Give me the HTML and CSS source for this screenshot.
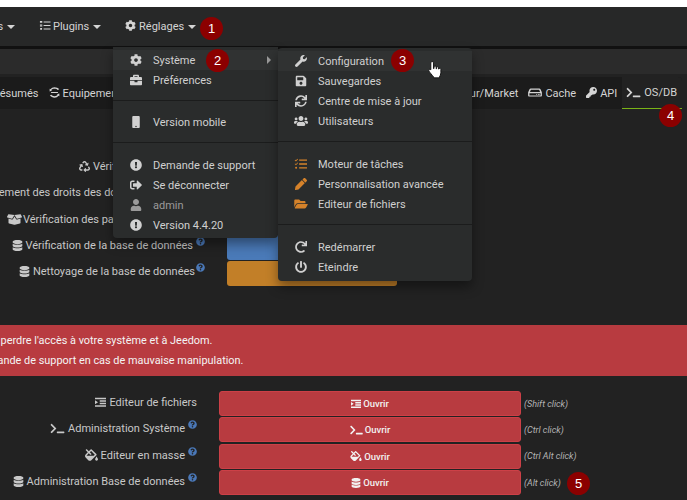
FILE: index.html
```html
<!DOCTYPE html>
<html lang="fr">

<head>
    <meta charset="UTF-8">
    <title>Jeedom OS/DB</title>
    <link rel="stylesheet" href="styles.css">
</head>

<body>
    <svg class="sprite" xmlns="http://www.w3.org/2000/svg">
        <symbol id="i-cog" viewBox="0 0 512 512"><path d="M487.4 315.7l-42.6-24.6c4.3-23.2 4.3-47 0-70.2l42.6-24.6c4.9-2.8 7.1-8.6 5.5-14-11.1-35.6-30-67.8-54.7-94.6-3.8-4.1-10-5.1-14.8-2.3L380.8 110c-17.9-15.4-38.5-27.3-60.8-35.1V25.8c0-5.6-3.9-10.5-9.4-11.7-36.7-8.2-74.3-7.8-109.2 0-5.5 1.2-9.4 6.1-9.4 11.7V75c-22.2 7.9-42.8 19.8-60.8 35.1L88.7 85.5c-4.9-2.8-11-1.9-14.8 2.3-24.7 26.7-43.6 58.9-54.7 94.6-1.7 5.4.6 11.2 5.5 14L67.3 221c-4.3 23.2-4.3 47 0 70.2l-42.6 24.6c-4.9 2.8-7.1 8.6-5.5 14 11.1 35.6 30 67.8 54.7 94.6 3.8 4.1 10 5.1 14.8 2.3l42.6-24.6c17.9 15.4 38.5 27.3 60.8 35.1v49.2c0 5.6 3.9 10.5 9.4 11.7 36.7 8.2 74.3 7.8 109.2 0 5.5-1.2 9.4-6.1 9.4-11.7v-49.2c22.2-7.9 42.8-19.8 60.8-35.1l42.6 24.6c4.9 2.8 11 1.9 14.8-2.3 24.7-26.7 43.6-58.9 54.7-94.6 1.5-5.5-.7-11.3-5.6-14.1zM256 336c-44.1 0-80-35.9-80-80s35.9-80 80-80 80 35.9 80 80-35.9 80-80 80z"/></symbol>
        <symbol id="i-wrench" viewBox="0 0 512 512"><path d="M507.73 109.1c-2.24-9.03-13.54-12.09-20.12-5.51l-74.36 74.36-67.88-11.31-11.31-67.88 74.36-74.36c6.62-6.62 3.43-17.9-5.66-20.16-47.38-11.74-99.55.91-136.58 37.93-39.64 39.64-50.55 97.1-34.05 147.2L18.74 402.76c-24.99 24.99-24.99 65.51 0 90.5 24.99 24.99 65.51 24.99 90.5 0l213.21-213.21c50.12 16.71 107.47 5.68 147.37-34.22 37.07-37.07 49.7-89.32 37.91-136.73z"/></symbol>
        <symbol id="i-save" viewBox="0 0 448 512"><path d="M433.941 129.941l-83.882-83.882A48 48 0 0 0 316.118 32H48C21.49 32 0 53.49 0 80v352c0 26.51 21.49 48 48 48h352c26.51 0 48-21.49 48-48V163.882a48 48 0 0 0-14.059-33.941zM224 416c-35.346 0-64-28.654-64-64 0-35.346 28.654-64 64-64s64 28.654 64 64c0 35.346-28.654 64-64 64zm96-304.52V212c0 6.627-5.373 12-12 12H76c-6.627 0-12-5.373-12-12V108c0-6.627 5.373-12 12-12h228.52c3.183 0 6.235 1.264 8.485 3.515l3.48 3.48A11.996 11.996 0 0 1 320 111.48z"/></symbol>
        <symbol id="i-sync" viewBox="0 0 512 512"><path d="M440.65 12.57l4 82.77A247.16 247.16 0 0 0 255.83 8C134.73 8 33.91 94.92 12.29 209.82A12 12 0 0 0 24.09 224h49.05a12 12 0 0 0 11.67-9.26 175.91 175.91 0 0 1 317-56.94l-101.46-4.86a12 12 0 0 0-12.57 12v47.41a12 12 0 0 0 12 12H500a12 12 0 0 0 12-12V12a12 12 0 0 0-12-12h-47.37a12 12 0 0 0-11.98 12.57zM255.83 432a175.61 175.61 0 0 1-146-77.8l101.8 4.87a12 12 0 0 0 12.57-12v-47.4a12 12 0 0 0-12-12H12a12 12 0 0 0-12 12V500a12 12 0 0 0 12 12h47.35a12 12 0 0 0 12-12.6l-4.15-82.57A247.17 247.17 0 0 0 255.83 504c121.11 0 221.93-86.92 243.55-201.82a12 12 0 0 0-11.8-14.18h-49.05a12 12 0 0 0-11.67 9.26A175.86 175.86 0 0 1 255.83 432z"/></symbol>
        <symbol id="i-users" viewBox="0 0 640 512"><path d="M96 224c35.3 0 64-28.7 64-64s-28.7-64-64-64-64 28.7-64 64 28.7 64 64 64zm448 0c35.3 0 64-28.7 64-64s-28.7-64-64-64-64 28.7-64 64 28.7 64 64 64zm32 32h-64c-17.6 0-33.5 7.1-45.1 18.6 40.3 22.1 68.9 62 75.1 109.4h66c17.7 0 32-14.3 32-32v-32c0-35.3-28.7-64-64-64zm-256 0c61.9 0 112-50.1 112-112S381.9 32 320 32 208 82.1 208 144s50.1 112 112 112zm76.8 32h-8.3c-20.8 10-43.9 16-68.5 16s-47.6-6-68.5-16h-8.3C179.6 288 128 339.6 128 403.2V432c0 26.5 21.5 48 48 48h288c26.5 0 48-21.5 48-48v-28.8c0-63.6-51.6-115.2-115.2-115.2zm-223.7-13.4C161.5 263.1 145.6 256 128 256H64c-35.3 0-64 28.7-64 64v32c0 17.7 14.3 32 32 32h65.9c6.3-47.4 34.9-87.3 75.2-109.4z"/></symbol>
        <symbol id="i-tasks" viewBox="0 0 512 512"><path d="M176 64h336v56H176zM176 228h336v56H176zM176 392h336v56H176zM10 70l30 30 64-70 26 24-90 98-56-56zM10 232l30 30 64-70 26 24-90 98-56-56zM48 368a44 44 0 1 1 0 88 44 44 0 0 1 0-88z"/></symbol>
        <symbol id="i-pencil" viewBox="0 0 512 512"><path d="M497.9 142.1l-46.1 46.1c-4.7 4.7-12.3 4.7-17 0l-111-111c-4.7-4.7-4.7-12.3 0-17l46.1-46.1c18.7-18.7 49.1-18.7 67.9 0l60.1 60.1c18.8 18.7 18.8 49.1 0 67.9zM284.2 99.8L21.6 362.4.4 483.9c-2.9 16.4 11.4 30.6 27.8 27.8l121.5-21.3 262.6-262.6c4.7-4.7 4.7-12.3 0-17l-111-111c-4.8-4.7-12.4-4.7-17.1 0z"/></symbol>
        <symbol id="i-folder" viewBox="0 0 576 512"><path d="M572.694 292.093L500.27 416.248A63.997 63.997 0 0 1 444.989 448H45.025c-18.523 0-30.064-20.093-20.731-36.093l72.424-124.155A64 64 0 0 1 152 256h399.964c18.523 0 30.064 20.093 20.73 36.093zM152 224h328v-48c0-26.51-21.49-48-48-48H272l-64-64H48C21.49 64 0 85.49 0 112v278.046l69.077-118.418C86.214 242.25 117.989 224 152 224z"/></symbol>
        <symbol id="i-redo" viewBox="0 0 512 512"><path d="M500.33 0h-47.41a12 12 0 0 0-12 12.57l4 82.76A247.42 247.42 0 0 0 256 8C119.34 8 7.9 119.53 8 256.19 8.1 393.07 119.1 504 256 504a247.1 247.1 0 0 0 166.18-63.91 12 12 0 0 0 .48-17.43l-34-34a12 12 0 0 0-16.38-.55A176 176 0 1 1 402.1 157.8l-101.53-4.87a12 12 0 0 0-12.57 12v47.41a12 12 0 0 0 12 12h200.33a12 12 0 0 0 12-12V12a12 12 0 0 0-12-12z"/></symbol>
        <symbol id="i-power" viewBox="0 0 512 512"><path d="M400 54.1c63 45 104 118.6 104 201.9 0 136.8-110.8 247.7-247.5 248C120 504.3 8.2 393 8 256.4 7.9 173.1 48.9 99.3 111.8 54.2c11.7-8.3 28-4.8 35 7.7L162.6 90c5.9 10.5 3.1 23.8-6.6 31-41.5 30.8-68 79.6-68 134.9-.1 92.3 74.5 168.1 168 168.1 91.6 0 168.6-74.2 168-169.1-.3-51.8-24.7-101.8-68.1-134-9.7-7.2-12.4-20.5-6.4-30.9l15.8-28.1c7-12.4 23.2-16.1 34.8-7.8zM296 264V24c0-13.3-10.7-24-24-24h-32c-13.3 0-24 10.7-24 24v240c0 13.3 10.7 24 24 24h32c13.3 0 24-10.7 24-24z"/></symbol>
        <symbol id="i-case" viewBox="0 0 512 512"><path d="M320 336c0 8.84-7.16 16-16 16h-96c-8.84 0-16-7.16-16-16v-48H0v144c0 25.6 22.4 48 48 48h416c25.6 0 48-22.4 48-48V288H320v48zm144-208h-80V80c0-25.6-22.4-48-48-48H176c-25.6 0-48 22.4-48 48v48H48c-25.6 0-48 22.4-48 48v80h512v-80c0-25.6-22.4-48-48-48zm-144 0H192V96h128v32z"/></symbol>
        <symbol id="i-mobile" viewBox="0 0 320 512"><path d="M272 0H48C21.5 0 0 21.5 0 48v416c0 26.5 21.5 48 48 48h224c26.5 0 48-21.5 48-48V48c0-26.5-21.5-48-48-48zM160 480c-17.7 0-32-14.3-32-32s14.3-32 32-32 32 14.3 32 32-14.3 32-32 32z"/></symbol>
        <symbol id="i-alert" viewBox="0 0 512 512"><path d="M504 256c0 136.997-111.043 248-248 248S8 392.997 8 256C8 119.083 119.043 8 256 8s248 111.083 248 248zm-248 50c-25.405 0-46 20.595-46 46s20.595 46 46 46 46-20.595 46-46-20.595-46-46-46zm-43.673-165.346l7.418 136c.347 6.364 5.609 11.346 11.982 11.346h48.546c6.373 0 11.635-4.982 11.982-11.346l7.418-136c.375-6.874-5.098-12.654-11.982-12.654h-63.383c-6.884 0-12.356 5.78-11.981 12.654z"/></symbol>
        <symbol id="i-signout" viewBox="0 0 512 512"><path d="M497 273L329 441c-15 15-41 4.5-41-17v-96H152c-13.3 0-24-10.7-24-24v-96c0-13.3 10.7-24 24-24h136V88c0-21.4 25.9-32 41-17l168 168c9.3 9.4 9.3 24.6 0 34zM192 436v-40c0-6.6-5.4-12-12-12H96c-17.7 0-32-14.3-32-32V160c0-17.7 14.3-32 32-32h84c6.6 0 12-5.4 12-12V76c0-6.6-5.4-12-12-12H96c-53 0-96 43-96 96v192c0 53 43 96 96 96h84c6.6 0 12-5.4 12-12z"/></symbol>
        <symbol id="i-user" viewBox="0 0 448 512"><path d="M224 256c70.7 0 128-57.3 128-128S294.7 0 224 0 96 57.3 96 128s57.3 128 128 128zm89.6 32h-16.7c-22.2 10.2-46.9 16-72.9 16s-50.6-5.8-72.9-16h-16.7C60.2 288 0 348.2 0 422.4V464c0 26.5 21.5 48 48 48h352c26.5 0 48-21.5 48-48v-41.6c0-74.2-60.2-134.4-134.4-134.4z"/></symbol>
        <symbol id="i-key" viewBox="0 0 512 512"><path d="M512 176.001C512 273.203 433.202 352 336 352c-11.22 0-22.19-1.062-32.827-3.069l-24.012 27.014A23.999 23.999 0 0 1 261.223 384H224v40c0 13.255-10.745 24-24 24h-40v40c0 13.255-10.745 24-24 24H24c-13.255 0-24-10.745-24-24v-78.059c0-6.365 2.529-12.47 7.029-16.971l161.802-161.802C163.108 213.814 160 195.271 160 176 160 78.798 238.797.001 335.999 0 433.488-.001 512 78.511 512 176.001zM336 128c0 26.51 21.49 48 48 48s48-21.49 48-48-21.49-48-48-48-48 21.49-48 48z"/></symbol>
        <symbol id="i-term" viewBox="0 0 640 512"><path d="M257.981 272.971L63.638 467.314c-9.373 9.373-24.569 9.373-33.941 0L7.029 444.647c-9.357-9.357-9.375-24.522-.04-33.901L161.011 256 6.99 101.255c-9.335-9.379-9.317-24.544.04-33.901l22.667-22.667c9.373-9.373 24.569-9.373 33.941 0L257.981 239.03c9.373 9.372 9.373 24.568 0 33.941zM640 456v-32c0-13.255-10.745-24-24-24H312c-13.255 0-24 10.745-24 24v32c0 13.255 10.745 24 24 24h304c13.255 0 24-10.745 24-24z"/></symbol>
        <symbol id="i-db" viewBox="0 0 448 512"><path d="M448 73.143v45.714C448 159.143 347.667 192 224 192S0 159.143 0 118.857V73.143C0 32.857 100.333 0 224 0s224 32.857 224 73.143zM448 176v102.857C448 319.143 347.667 352 224 352S0 319.143 0 278.857V176c48.125 33.143 136.208 48.572 224 48.572S399.874 209.143 448 176zm0 160v102.857C448 479.143 347.667 512 224 512S0 479.143 0 438.857V336c48.125 33.143 136.208 48.572 224 48.572S399.874 369.143 448 336z"/></symbol>
        <symbol id="i-help" viewBox="0 0 512 512"><path d="M504 256c0 136.997-111.043 248-248 248S8 392.997 8 256C8 119.083 119.043 8 256 8s248 111.083 248 248zM262.655 90c-54.497 0-89.255 22.957-116.549 63.758-3.536 5.286-2.353 12.415 2.715 16.258l34.699 26.31c5.205 3.947 12.621 3.008 16.665-2.122 17.864-22.658 30.113-35.797 57.303-35.797 20.429 0 45.698 13.148 45.698 32.958 0 14.976-12.363 22.667-32.534 33.976C247.128 238.528 216 254.941 216 296v4c0 6.627 5.373 12 12 12h56c6.627 0 12-5.373 12-12v-1.333c0-28.462 83.186-29.647 83.186-106.667 0-58.002-60.165-102-116.531-102zM256 338c-25.365 0-46 20.635-46 46 0 25.364 20.635 46 46 46s46-20.636 46-46c0-25.365-20.635-46-46-46z"/></symbol>
        <symbol id="i-list" viewBox="0 0 512 512"><path d="M0 40h512v70H0zM220 155h292v70H220zM220 270h292v70H220zM0 385h512v70H0zM0 150l140 95L0 340z"/></symbol>
        <symbol id="i-listcheck" viewBox="0 0 512 512"><path d="M190 70h322v50H190zM190 230h322v50H190zM190 390h322v50H190zM20 50h110v40H20zM20 100h110v40H20zM20 210h110v40H20zM20 260h110v40H20zM30 370h90v80H30z"/></symbol>
        <symbol id="i-fill" viewBox="0 0 576 512"><path d="M512 320s-64 92.65-64 128c0 35.35 28.66 64 64 64s64-28.65 64-64-64-128-64-128zm-9.37-102.94L294.94 9.37C288.69 3.12 280.5 0 272.31 0s-16.38 3.12-22.62 9.37l-81.58 81.58L81.93 4.76c-6.25-6.25-16.38-6.25-22.62 0L36.69 27.38c-6.24 6.25-6.24 16.38 0 22.62l86.19 86.18-94.76 94.76c-37.49 37.48-37.49 98.26 0 135.75l117.19 117.19c18.74 18.74 43.31 28.12 67.87 28.12 24.57 0 49.13-9.37 67.87-28.12l221.57-221.57c12.5-12.5 12.5-32.75.01-45.25zm-116.22 70.97H65.93c1.36-3.84 3.57-7.98 7.43-11.83l13.15-13.15 81.61-81.61 58.6 58.6c12.49 12.49 32.75 12.49 45.24 0s12.49-32.75 0-45.24l-58.6-58.6 58.95-58.95 162.44 162.44-48.34 48.34z"/></symbol>
        <symbol id="i-recycle" viewBox="0 0 512 512"><path d="M184.561 261.903c3.232 13.997-12.123 24.635-24.068 17.168l-40.736-25.455-50.867 81.402C55.606 356.273 70.96 384 96.012 384H148c6.627 0 12 5.373 12 12v40c0 6.627-5.373 12-12 12H96.115c-75.334 0-121.302-83.048-81.408-146.88l50.822-81.388-40.725-25.448c-12.081-7.547-8.966-25.961 4.879-29.158l110.237-25.45c8.611-1.988 17.201 3.381 19.189 11.99l25.452 110.237zm98.561-182.915l41.289 66.076-40.74 25.457c-12.051 7.528-9 25.953 4.879 29.158l110.237 25.45c8.672 1.999 17.215-3.438 19.189-11.99l25.45-110.237c3.197-13.844-11.99-24.719-24.068-17.168l-40.687 25.424-41.263-66.082c-37.521-60.033-125.209-60.171-162.816 0l-17.963 28.766c-3.51 5.62-1.8 13.021 3.82 16.533l33.919 21.195c5.62 3.512 13.024 1.803 16.536-3.817l17.961-28.743c12.712-20.341 41.973-19.676 54.257-.022zM497.288 301.12l-27.515-44.065c-3.511-5.623-10.916-7.334-16.538-3.821l-33.861 21.159c-5.62 3.512-7.33 10.915-3.818 16.536l27.564 44.112c13.257 21.211-2.057 48.96-27.136 48.96H320V336.02c0-14.213-17.242-21.383-27.313-11.313l-80 79.981c-6.249 6.248-6.249 16.379 0 22.627l80 79.989C302.689 517.308 320 510.3 320 495.989V448h95.88c75.274 0 121.335-82.997 81.408-146.88z"/></symbol>
        <symbol id="i-box" viewBox="0 0 640 512"><path d="M425.7 256c-16.9 0-32.8-9-41.4-23.4L320 126l-64.2 106.6c-8.7 14.5-24.6 23.5-41.5 23.5-4.5 0-9-.6-13.3-1.9L64 215v178c0 14.7 10 27.5 24.2 31l216.2 54.1c10.2 2.5 20.9 2.5 31 0L551.8 424c14.2-3.6 24.2-16.4 24.2-31V215l-137 39.1c-4.3 1.3-8.8 1.9-13.3 1.9zm212.6-112.2L586.8 41c-3.1-6.2-9.8-9.8-16.7-8.9L320 64l91.7 152.1c3.8 6.3 11.4 9.3 18.5 7.3l197.9-56.5c9.9-2.9 14.7-13.9 10.2-23.1zM53.2 41L1.7 143.8c-4.6 9.2.3 20.2 10.1 23l197.9 56.5c7.1 2 14.7-1 18.5-7.3L320 64 69.8 32.1c-6.9-.8-13.5 2.7-16.6 8.9z"/></symbol>
        <symbol id="i-hdd" viewBox="0 0 640 512"><path d="M120 70h400c24 0 44 12 56 34l58 130c4 10 6 20 6 30v130c0 26-20 48-48 48H48c-26 0-48-22-48-48V264c0-10 2-20 6-30l58-130c12-22 32-34 56-34zM128 130l-44 98h472l-44-98zM60 290v100h520V290zM370 320h40v40h-40zM450 320h90v40h-90z"/></symbol>
        <symbol id="i-eq" viewBox="0 0 512 512"><path d="M256 16c-76 0-144 36-188 92l-38-24v120l110-44-34-22c32-38 80-62 150-62s118 24 150 62l66-36C428 52 332 16 256 16zM96 232h320v48H96zM482 298l-110 44 34 22c-32 38-80 62-150 62s-118-24-150-62l-66 36c44 60 140 96 216 96s144-36 188-92l38 24z"/></symbol>
    </svg>

    <div class="top-strip"></div>

    <nav class="navbar">
        <span class="nav-item">Outils <i class="caret"></i></span>
        <span class="nav-item"><svg class="icon icon-nav"><use href="#i-listcheck"/></svg>Plugins <i class="caret"></i></span>
        <span class="nav-item"><svg class="icon"><use href="#i-cog"/></svg>Réglages <i class="caret"></i></span>
    </nav>
    <div class="subbar"></div>

    <div class="tabs">
        <div class="tabs-group">
            <span class="tab">Résumés</span>
            <span class="tab"><svg class="icon"><use href="#i-eq"/></svg>Equipements</span>
        </div>
        <div class="tabs-group">
            <span class="tab">Mise à jour/Market</span>
            <span class="tab"><svg class="icon icon-wide"><use href="#i-hdd"/></svg>Cache</span>
            <span class="tab"><svg class="icon"><use href="#i-key"/></svg>API</span>
            <span class="tab tab-active"><svg class="icon icon-term"><use href="#i-term"/></svg>OS/DB</span>
        </div>
    </div>

    <section class="checks">
        <div class="row">
            <label class="row-label"><svg class="icon"><use href="#i-recycle"/></svg>Vérification générale<svg class="help"><use href="#i-help"/></svg></label>
            <span class="btn btn-blue"></span>
        </div>
        <div class="row">
            <label class="row-label">Rétablissement des droits des dossiers et fichiers :<svg class="help"><use href="#i-help"/></svg></label>
            <span class="btn btn-blue"></span>
        </div>
        <div class="row">
            <label class="row-label"><svg class="icon icon-box"><use href="#i-box"/></svg>Vérification des packages système<svg class="help"><use href="#i-help"/></svg></label>
            <span class="btn btn-blue"></span>
        </div>
        <div class="row">
            <label class="row-label"><svg class="icon"><use href="#i-db"/></svg>Vérification de la base de données<svg class="help"><use href="#i-help"/></svg></label>
            <span class="btn btn-blue"></span>
        </div>
        <div class="row">
            <label class="row-label"><svg class="icon"><use href="#i-db"/></svg>Nettoyage de la base de données<svg class="help help-tight"><use href="#i-help"/></svg></label>
            <span class="btn btn-orange"></span>
        </div>
    </section>

    <div class="alert">
        <p class="alert-one">de perdre l'accès à votre système et à Jeedom.</p>
        <p class="alert-two">demande de support en cas de mauvaise manipulation.</p>
    </div>

    <section class="tools">
        <div class="row">
            <label class="row-label"><svg class="icon"><use href="#i-list"/></svg>Editeur de fichiers</label>
            <span class="btn btn-red"><svg class="icon"><use href="#i-list"/></svg>Ouvrir</span>
            <em class="hint">(Shift click)</em>
        </div>
        <div class="row">
            <label class="row-label"><svg class="icon icon-term"><use href="#i-term"/></svg>Administration Système<svg class="help"><use href="#i-help"/></svg></label>
            <span class="btn btn-red"><svg class="icon icon-term"><use href="#i-term"/></svg>Ouvrir</span>
            <em class="hint">(Ctrl click)</em>
        </div>
        <div class="row">
            <label class="row-label"><svg class="icon icon-fill"><use href="#i-fill"/></svg>Editeur en masse<svg class="help"><use href="#i-help"/></svg></label>
            <span class="btn btn-red"><svg class="icon icon-fill"><use href="#i-fill"/></svg>Ouvrir</span>
            <em class="hint">(Ctrl Alt click)</em>
        </div>
        <div class="row">
            <label class="row-label"><svg class="icon"><use href="#i-db"/></svg>Administration Base de données<svg class="help"><use href="#i-help"/></svg></label>
            <span class="btn btn-red"><svg class="icon"><use href="#i-db"/></svg>Ouvrir</span>
            <em class="hint">(Alt click)</em>
        </div>
    </section>

    <!-- menus open over the page -->
    <div class="menu menu-main">
        <div class="menu-row menu-row-hover"><svg class="icon"><use href="#i-cog"/></svg>Système<i class="caret-right"></i></div>
        <div class="menu-row"><svg class="icon"><use href="#i-case"/></svg>Préférences</div>
        <hr>
        <div class="menu-row"><svg class="icon"><use href="#i-mobile"/></svg>Version mobile</div>
        <hr class="hr-wide">
        <div class="menu-row"><svg class="icon"><use href="#i-alert"/></svg>Demande de support</div>
        <div class="menu-row"><svg class="icon"><use href="#i-signout"/></svg>Se déconnecter</div>
        <div class="menu-row menu-row-muted"><svg class="icon"><use href="#i-user"/></svg>admin</div>
        <div class="menu-row"><svg class="icon"><use href="#i-alert"/></svg>Version 4.4.20</div>
    </div>

    <div class="menu menu-sub">
        <div class="menu-row menu-row-hover"><svg class="icon"><use href="#i-wrench"/></svg>Configuration</div>
        <div class="menu-row"><svg class="icon"><use href="#i-save"/></svg>Sauvegardes</div>
        <div class="menu-row"><svg class="icon"><use href="#i-sync"/></svg>Centre de mise à jour</div>
        <div class="menu-row"><svg class="icon"><use href="#i-users"/></svg>Utilisateurs</div>
        <hr class="hr-wide">
        <div class="menu-row menu-row-warn"><svg class="icon"><use href="#i-tasks"/></svg>Moteur de tâches</div>
        <div class="menu-row menu-row-warn"><svg class="icon"><use href="#i-pencil"/></svg>Personnalisation avancée</div>
        <div class="menu-row menu-row-warn"><svg class="icon"><use href="#i-folder"/></svg>Editeur de fichiers</div>
        <hr class="hr-wide">
        <div class="menu-row"><svg class="icon"><use href="#i-redo"/></svg>Redémarrer</div>
        <div class="menu-row"><svg class="icon"><use href="#i-power"/></svg>Eteindre</div>
    </div>

    <svg class="cursor" viewBox="0 0 16 20">
        <path d="M5 1.5c.8 0 1.4.6 1.4 1.5v6l.6-.1V7.5c0-1.600 2.200-1.600 2.200 0v1.600l.5.1V8.200c0-1.500 2.100-1.500 2.100 0v1.300l.4.100c0-1.300 2-1.200 2 .2v3.700c0 2-1 3.200-1.500 4.500v.8H6.600v-.8C5.500 16.500 2 12.600 1.500 11.500c-.6-1.400 1-2.400 2-1.300l.1.1V3c0-.9.600-1.500 1.400-1.500z" fill="#fff" stroke="#111" stroke-width="1"/>
    </svg>

    <span class="badge badge-1">1</span>
    <span class="badge badge-2">2</span>
    <span class="badge badge-3">3</span>
    <span class="badge badge-4">4</span>
    <span class="badge badge-5">5</span>
</body>

</html>
```

FILE: styles.css
```css
body {
    position: relative;
    height: 500px;
    margin: 0;
    overflow: hidden;
    background-color: #222222;
    font-family: Roboto, "Liberation Sans", sans-serif;
    font-size: 11px;
    color: #cfcfcf;
}

.sprite {
    display: none;
}

.icon {
    width: 11px;
    height: 11px;
    margin-right: 3px;
    fill: currentColor;
    vertical-align: -1px;
}

.icon-nav {
    width: 12px;
    margin-right: 2px;
}

.icon-wide {
    width: 14px;
}

.icon-box {
    width: 15px;
    height: 13px;
    margin-right: 1px;
}

.icon-fill {
    width: 13px;
    height: 12px;
}

.icon-term {
    width: 15px;
    margin-right: 3px;
}

.help {
    width: 9px;
    height: 9px;
    margin: 0 0 0 3px;
    fill: #4a78b8;
    transform: translateY(-4px);
}

.help-tight {
    margin-left: 1px;
}

.top-strip {
    height: 7px;
    background-color: #ffffff;
}

.navbar {
    display: flex;
    align-items: center;
    gap: 24px;
    height: 39px;
    margin-left: -25px;
    border-bottom: 3px solid #111111;
    background-color: #272828;
    white-space: nowrap;
}

.nav-item {
    color: #d4d4d4;
}

.caret {
    display: inline-block;
    margin-left: 1px;
    border-top: 4px solid #d4d4d4;
    border-left: 4px solid transparent;
    border-right: 4px solid transparent;
    vertical-align: 1px;
}

.subbar {
    height: 25px;
    background-color: #2b2b2b;
}

.tabs {
    display: flex;
    justify-content: space-between;
    align-items: stretch;
    height: 32px;
    margin: 3px 5px 0 -7px;
    border-top-right-radius: 4px;
    background-color: #1b1b1b;
    white-space: nowrap;
}

.tabs-group {
    display: flex;
    align-items: center;
    gap: 10px;
}

.tab {
    color: #d4d4d4;
}

.tab-active {
    align-self: stretch;
    display: flex;
    align-items: center;
    margin-left: -5px;
    padding: 0 5px 0 4px;
    border-bottom: 1px solid #7ab317;
    border-top-right-radius: 4px;
    background-color: #222222;
}

.checks {
    display: flex;
    flex-direction: column;
    gap: 1.3px;
    margin-top: 47px;
}

.row {
    display: flex;
    align-items: center;
    height: 25px;
}

.row-label {
    display: flex;
    flex: none;
    justify-content: flex-end;
    align-items: center;
    padding-bottom: 4px;
    white-space: nowrap;
    color: #c8c8c8;
}

.checks .row-label {
    width: 205px;
    margin-right: 22px;
}

.tools .row-label {
    width: 197px;
    margin-right: 22px;
    padding-bottom: 2px;
}

.btn {
    display: flex;
    justify-content: center;
    align-items: center;
    box-sizing: border-box;
    height: 25px;
    border-radius: 3px;
    font-size: 9.5px;
    font-weight: 500;
    color: #f2f2f2;
}

.btn .icon {
    width: 10px;
    height: 10px;
    margin-right: 2px;
}

.btn .icon-term {
    width: 13px;
}

.btn .icon-fill {
    width: 12px;
}

.btn-blue {
    width: 170px;
    background-color: #4a7ab8;
}

.btn-orange {
    width: 170px;
    background-color: #c27f28;
}

.btn-red {
    width: 302px;
    border: 1px solid #cc4047;
    background-color: #b83b40;
}

.alert {
    box-sizing: border-box;
    height: 51px;
    margin-top: 39px;
    padding-top: 9px;
    background-color: #b83b40;
    font-size: 10.9px;
    color: #f4f4f4;
    white-space: nowrap;
}

.alert p {
    margin: 0 0 6px;
    line-height: 14px;
}

.alert-one {
    margin-left: -14px !important;
}

.alert-two {
    margin-left: -24px !important;
}

.tools {
    display: flex;
    flex-direction: column;
    gap: 1.3px;
    margin-top: 15px;
}

.hint {
    margin-left: 3px;
    font-size: 9px;
    color: #b4b4b4;
}

.menu {
    position: absolute;
    box-sizing: border-box;
    padding: 3px 0;
    background-color: #2a2c2c;
    box-shadow: 0 6px 12px rgba(0, 0, 0, 0.4);
    color: #d0d0d0;
}

.menu-main {
    top: 47px;
    left: 113px;
    width: 165px;
    height: 191px;
    border-radius: 0 0 4px 4px;
}

.menu-sub {
    top: 48px;
    left: 278px;
    width: 194px;
    height: 233px;
    border-radius: 4px;
}

.menu hr {
    margin: 10px 0 11px;
    border: 0;
    border-top: 1px solid #1b1c1c;
}

.menu .hr-wide {
    margin-bottom: 12px;
}

.menu-row {
    position: relative;
    display: flex;
    align-items: center;
    height: 20px;
    white-space: nowrap;
}

.menu-row .icon {
    flex: none;
    width: 14px;
    height: 12px;
    margin: 0 10px 0 16px;
}

.menu-row-hover {
    background-color: #303232;
}

.menu-row-muted {
    color: #9a9a9a;
}

.menu-row-warn .icon {
    fill: #d5822a;
}

.caret-right {
    position: absolute;
    right: 7px;
    border-left: 4px solid #9a9a9a;
    border-top: 4px solid transparent;
    border-bottom: 4px solid transparent;
}

.cursor {
    position: absolute;
    top: 60px;
    left: 427px;
    width: 16px;
    height: 19px;
}

.badge {
    position: absolute;
    display: flex;
    justify-content: center;
    align-items: center;
    width: 23px;
    height: 23px;
    border-radius: 50%;
    background-color: #8b0000;
    font-family: "Liberation Sans", sans-serif;
    font-size: 13px;
    color: #ffffff;
}

.badge-1 { top: 17px; left: 200px; }
.badge-2 { top: 49px; left: 206px; }
.badge-3 { top: 49px; left: 391px; }
.badge-4 { top: 104px; left: 659px; }
.badge-5 { top: 472px; left: 567px; }
```
